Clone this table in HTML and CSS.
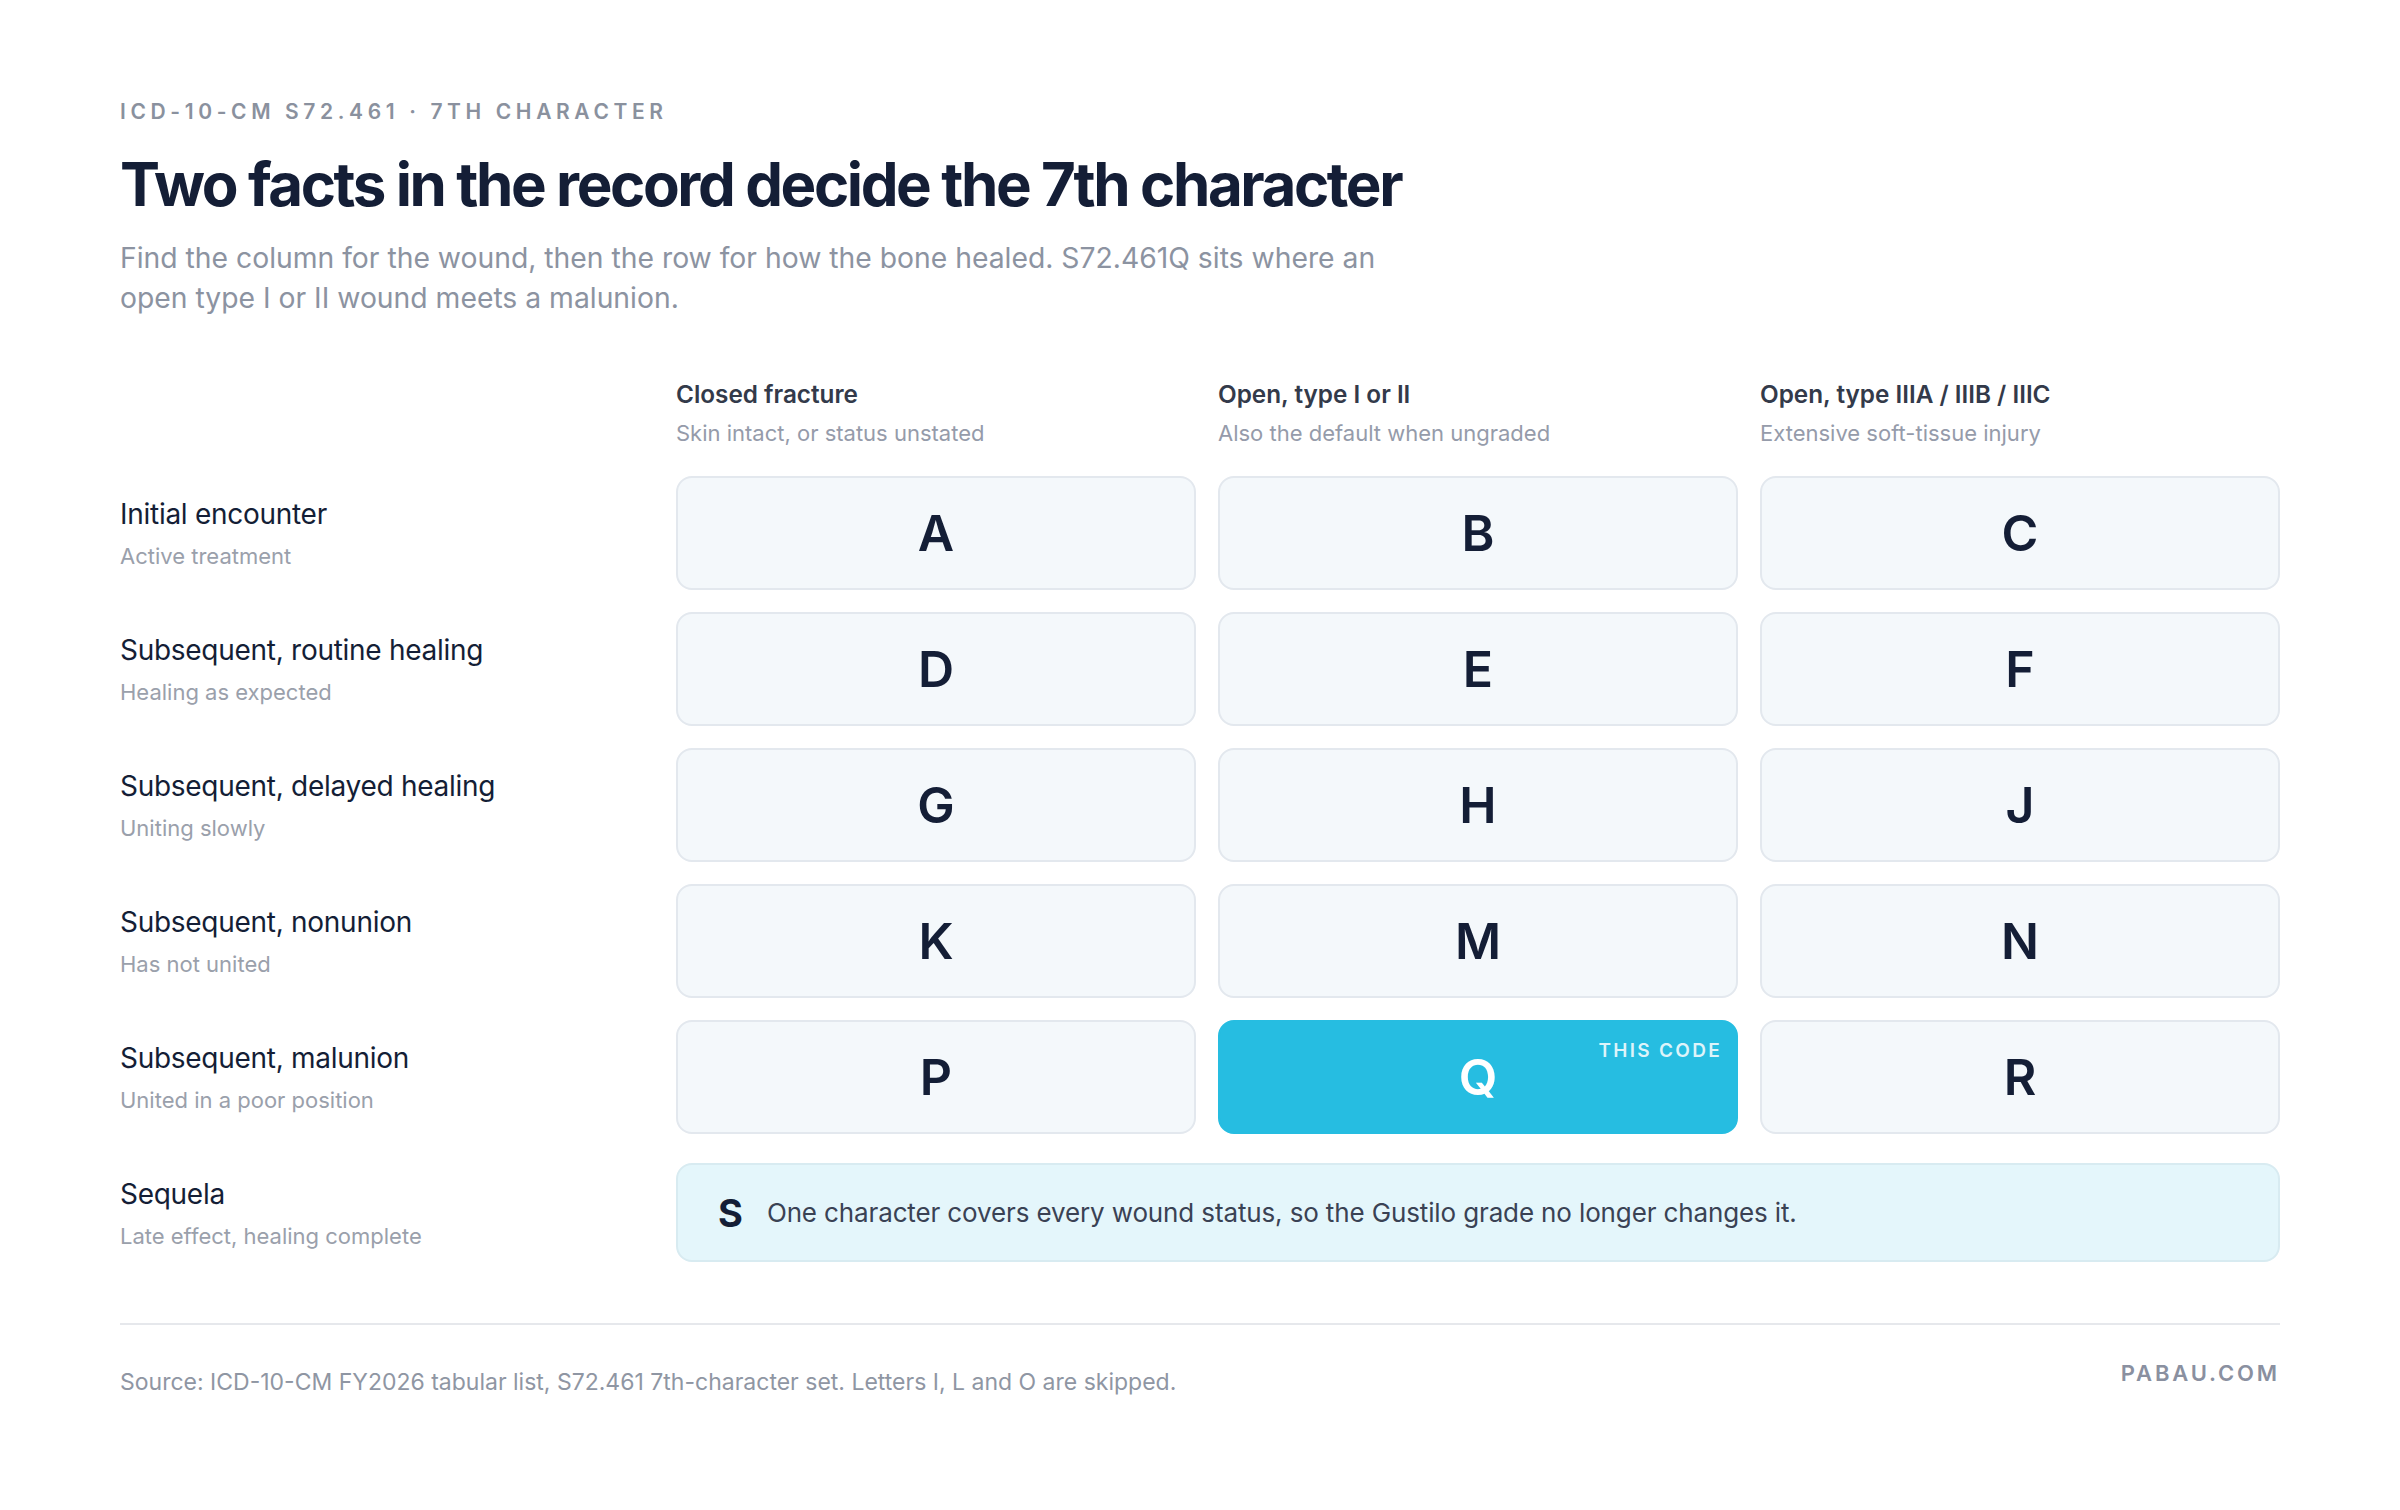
FILE: index.html
```html
<!DOCTYPE html>
<html lang="en">
<head>
<meta charset="utf-8">
<title>S72.461 7th character</title>
<link rel="stylesheet" href="styles.css">
</head>
<body>
<main class="page">
  <header class="intro">
    <div class="eyebrow">ICD-10-CM S72.461 · 7TH CHARACTER</div>
    <h1 class="title">Two facts in the record decide the 7th character</h1>
    <p class="lede">Find the column for the wound, then the row for how the bone healed. S72.461Q sits where an open type I or II wound meets a malunion.</p>
  </header>

  <section class="matrix">
    <div class="corner"></div>
    <div class="colhead"><div class="ch-title">Closed fracture</div><div class="ch-sub">Skin intact, or status unstated</div></div>
    <div class="colhead"><div class="ch-title">Open, type I or II</div><div class="ch-sub">Also the default when ungraded</div></div>
    <div class="colhead"><div class="ch-title">Open, type IIIA / IIIB / IIIC</div><div class="ch-sub">Extensive soft-tissue injury</div></div>

    <div class="rowhead"><div class="rh-title">Initial encounter</div><div class="rh-sub">Active treatment</div></div>
    <div class="cell">A</div><div class="cell">B</div><div class="cell">C</div>

    <div class="rowhead"><div class="rh-title">Subsequent, routine healing</div><div class="rh-sub">Healing as expected</div></div>
    <div class="cell">D</div><div class="cell">E</div><div class="cell">F</div>

    <div class="rowhead"><div class="rh-title">Subsequent, delayed healing</div><div class="rh-sub">Uniting slowly</div></div>
    <div class="cell">G</div><div class="cell">H</div><div class="cell">J</div>

    <div class="rowhead"><div class="rh-title">Subsequent, nonunion</div><div class="rh-sub">Has not united</div></div>
    <div class="cell">K</div><div class="cell">M</div><div class="cell">N</div>

    <div class="rowhead"><div class="rh-title">Subsequent, malunion</div><div class="rh-sub">United in a poor position</div></div>
    <div class="cell">P</div><div class="cell cell-active">Q<span class="badge">THIS CODE</span></div><div class="cell">R</div>

    <div class="rowhead rowhead-sequela"><div class="rh-title">Sequela</div><div class="rh-sub">Late effect, healing complete</div></div>
    <div class="sequela"><span class="seq-letter">S</span><span class="seq-text">One character covers every wound status, so the Gustilo grade no longer changes it.</span></div>
  </section>

  <footer class="foot">
    <div class="source">Source: ICD-10-CM FY2026 tabular list, S72.461 7th-character set. Letters I, L and O are skipped.</div>
    <div class="brand">PABAU.COM</div>
  </footer>
</main>
</body>
</html>
```

FILE: styles.css
```css
* { box-sizing: border-box; }
html, body { margin: 0; padding: 0; background: #ffffff; }
body {
  font-family: Inter, "Noto Sans", "Liberation Sans", sans-serif;
  color: #141e36;
}
.page {
  width: 2400px;
  padding: 100px 120px 0 120px;
}
.eyebrow {
  font-size: 21px;
  line-height: 24px;
  font-weight: 600;
  letter-spacing: 0.22em;
  color: #8a919e;
}
.title {
  margin: 26px 0 0 0;
  font-size: 60px;
  line-height: 68px;
  font-weight: 700;
  letter-spacing: -0.04em;
  color: #141e36;
}
.lede {
  margin: 20px 0 0 0;
  max-width: 1330px;
  font-size: 28.3px;
  line-height: 40px;
  font-weight: 400;
  color: #8c93a1;
}
.matrix {
  margin-top: 61px;
  display: grid;
  grid-template-columns: 534px repeat(3, 1fr);
  grid-auto-rows: 114px;
  grid-template-rows: auto;
  column-gap: 22px;
  row-gap: 22px;
}
.colhead {
  padding-bottom: 8px;
}
.ch-title {
  font-size: 24.3px;
  line-height: 30px;
  font-weight: 600;
  color: #333a4a;
}
.ch-sub {
  margin-top: 11px;
  font-size: 22px;
  line-height: 26px;
  color: #959baa;
}
.rowhead {
  display: flex;
  flex-direction: column;
  justify-content: center;
  gap: 12px;
}
.rh-title {
  font-size: 28px;
  line-height: 34px;
  font-weight: 400;
  letter-spacing: -0.01em;
  color: #141e36;
}
.rh-sub {
  font-size: 22px;
  line-height: 26px;
  color: #9aa0ab;
}
.cell {
  position: relative;
  display: flex;
  align-items: center;
  justify-content: center;
  background: #f4f8fb;
  border: 2px solid #e3e8ee;
  border-radius: 16px;
  font-size: 50px;
  font-weight: 600;
  color: #141e36;
}
.cell-active {
  background: #26bde1;
  border-color: #26bde1;
  color: #ffffff;
}
.badge {
  position: absolute;
  top: 17px;
  right: 14px;
  font-size: 19px;
  line-height: 24px;
  font-weight: 600;
  letter-spacing: 0.12em;
  color: rgba(255, 255, 255, 0.85);
}
.rowhead-sequela, .sequela {
  margin-top: 7px;
  height: 99px;
}
.sequela {
  grid-column: 2 / span 3;
  display: flex;
  align-items: center;
  gap: 24px;
  padding-left: 40px;
  background: #e4f6fb;
  border: 2px solid #d8ebf1;
  border-radius: 16px;
}
.seq-letter {
  font-size: 38px;
  font-weight: 700;
  color: #141e36;
}
.seq-text {
  font-size: 26px;
  letter-spacing: -0.005em;
  color: #3a4254;
}
.foot {
  margin-top: 53px;
  border-top: 2px solid #e6e8ec;
  padding-top: 33px;
  display: flex;
  justify-content: space-between;
  align-items: flex-start;
}
.source {
  margin-top: 9px;
  font-size: 23px;
  line-height: 30px;
  color: #8f96a3;
}
.brand {
  font-size: 22px;
  line-height: 30px;
  font-weight: 600;
  letter-spacing: 0.13em;
  color: #8a90a0;
}
```
